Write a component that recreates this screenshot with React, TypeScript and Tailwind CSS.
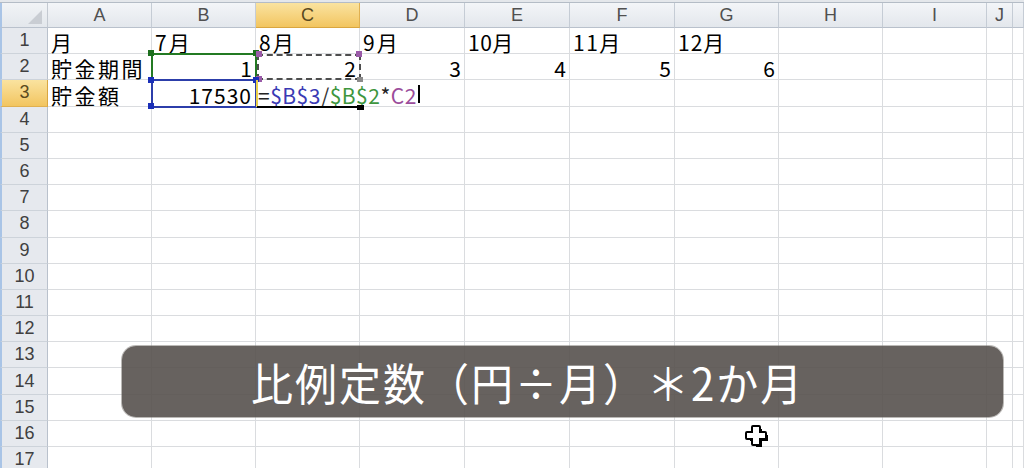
import type { ReactNode } from 'react';

// ─── Sheet layout ─────────────────────────────────────────────────────────────

const COLS = [
  { name: 'A', w: 'w-[104px]' },
  { name: 'B', w: 'w-[104px]' },
  { name: 'C', w: 'w-[104px]' },
  { name: 'D', w: 'w-[105px]' },
  { name: 'E', w: 'w-[105px]' },
  { name: 'F', w: 'w-[105px]' },
  { name: 'G', w: 'w-[104px]' },
  { name: 'H', w: 'w-[104px]' },
  { name: 'I', w: 'w-[104px]' },
  { name: 'J', w: 'w-[26px]' },
  { name: '', w: 'flex-1' },
];

type Cell = { text: string; right?: boolean; cls?: string };

const DATA: Record<number, Record<string, Cell>> = {
  1: {
    A: { text: '月', cls: 'tracking-[2px]' },
    B: { text: '7月', cls: 'tracking-[2px]' },
    C: { text: '8月', cls: 'tracking-[2px]' },
    D: { text: '9月', cls: 'tracking-[2px]' },
    E: { text: '10月', cls: 'tracking-[0.5px]' },
    F: { text: '11月', cls: 'tracking-[1.5px]' },
    G: { text: '12月', cls: 'tracking-[1px]' },
  },
  2: {
    A: { text: '貯金期間', cls: 'tracking-[2.5px]' },
    B: { text: '1', right: true },
    C: { text: '2', right: true },
    D: { text: '3', right: true },
    E: { text: '4', right: true },
    F: { text: '5', right: true },
    G: { text: '6', right: true },
  },
  3: {
    A: { text: '貯金額', cls: 'tracking-[2.5px]' },
    B: { text: '17530', right: true, cls: 'tracking-[1px]' },
  },
};

const ROWS = Array.from({ length: 17 }, (_, i) => i + 1);

// ─── Pieces ───────────────────────────────────────────────────────────────────

function Corner() {
  return (
    <div className="relative w-[48px] shrink-0 border-l-2 border-l-[#a9c4e6] border-r border-r-[#c3c9d1] border-b border-b-[#b9c1cc] bg-gradient-to-b from-[#f1f3f6] to-[#e3e7ec]">
      <svg className="absolute right-[5px] bottom-[3px]" width="14" height="14" viewBox="0 0 14 14">
        <path d="M14 0 V14 H0 Z" fill="#c9cdd3" />
      </svg>
    </div>
  );
}

function ColHeader({ name, w }: { name: string; w: string }) {
  const active = name === 'C';
  return (
    <div
      className={`${w} shrink-0 flex items-center justify-center border-r border-b text-[18px] ${
        active
          ? 'bg-gradient-to-b from-[#fae39f] to-[#f2c55f] border-r-[#e0b050] border-b-[#d9a640] text-[#5a4a20]'
          : 'bg-gradient-to-b from-[#f3f5f8] to-[#e3e7ec] border-r-[#c5ccd5] border-b-[#b9c1cc] text-[#505050]'
      }`}
    >
      {name}
    </div>
  );
}

function RowHeader({ n }: { n: number }) {
  const active = n === 3;
  return (
    <div
      className={`w-[48px] shrink-0 flex items-center justify-center border-l-2 border-l-[#a9c4e6] border-r border-b text-[18px] ${
        active
          ? 'bg-gradient-to-b from-[#fae39f] to-[#f2c55f] border-r-[#d9a640] border-b-[#e0b050] text-[#5a4a20]'
          : 'bg-[#e6e9ee] border-r-[#b9c1cc] border-b-[#cdd3da] text-[#404040]'
      }`}
    >
      {n}
    </div>
  );
}

function Square({ x, y, color }: { x: string; y: string; color: string }) {
  return <div className={`absolute ${x} ${y} ${color} w-[6px] h-[6px]`} />;
}

function Formula() {
  const parts: [string, string][] = [
    ['=', 'text-[#222]'],
    ['$B$3', 'text-[#3a3ab4]'],
    ['/', 'text-[#333]'],
    ['$B$2', 'text-[#3e963e]'],
    ['*', 'text-[#222]'],
    ['C2', 'text-[#9b4c9b]'],
  ];
  return (
    <div className="absolute left-[257px] top-[82px] w-[170px] h-[24px] bg-white flex items-end pl-[1px] text-[21px] leading-[22px] tracking-[0.5px]">
      {parts.map(([t, c], i) => (
        <span key={i} className={c}>
          {t}
        </span>
      ))}
      <span className="ml-[1px] mb-[3px] w-[2px] h-[18px] bg-black" />
    </div>
  );
}

function Overlays(): ReactNode {
  return (
    <>
      {/* B2 reference (green) */}
      <div className="absolute left-[151px] top-[53px] w-[106px] h-[28px] border-2 border-[#237a23]" />
      <Square x="left-[148px]" y="top-[50px]" color="bg-[#1d6e1d]" />
      <Square x="left-[253px]" y="top-[50px]" color="bg-[#1d6e1d]" />

      {/* C2 reference (purple, dashed) */}
      <div className="absolute left-[257px] top-[54px] w-[104px] h-[26px] border-2 border-dashed border-[#4e4e4e]" />
      <Square x="left-[256px]" y="top-[51px]" color="bg-[#9a5aa8]" />
      <Square x="left-[356px]" y="top-[51px]" color="bg-[#9a5aa8]" />
      <Square x="left-[256px]" y="top-[76px]" color="bg-[#9a5aa8]" />
      <Square x="left-[357px]" y="top-[77px]" color="bg-[#8a8a8a]" />

      {/* B3 reference (blue) */}
      <div className="absolute left-[151px] top-[79px] w-[106px] h-[29px] border-2 border-[#2c3eaa]" />
      <Square x="left-[148px]" y="top-[77px]" color="bg-[#1a2fb8]" />
      <Square x="left-[253px]" y="top-[77px]" color="bg-[#1a2fb8]" />
      <Square x="left-[148px]" y="top-[103px]" color="bg-[#1a2fb8]" />

      {/* C3 editing */}
      <Formula />
      <div className="absolute left-[256px] top-[80px] w-[2px] h-[27px] bg-[#e9cf4a]" />
      <div className="absolute left-[257px] top-[106px] w-[100px] h-[2px] bg-black" />
      <div className="absolute left-[357px] top-[105px] w-[7px] h-[5px] bg-black" />
    </>
  );
}

function CellCursor() {
  return (
    <svg className="absolute left-[745px] top-[425px]" width="25" height="25" viewBox="0 0 25 25">
      <path d="M9 2 H15 V8 H21 V14 H15 V20 H9 V14 H3 V8 H9 Z" fill="#000" transform="translate(2 2)" />
      <path
        d="M8 1 H14 Q15 1 15 2 V7 H20 Q21 7 21 8 V13 Q21 14 20 14 H15 V19 Q15 20 14 20 H8 Q7 20 7 19 V14 H2 Q1 14 1 13 V8 Q1 7 2 7 H7 V2 Q7 1 8 1 Z"
        fill="#fff"
        stroke="#000"
        strokeWidth={2}
      />
    </svg>
  );
}

function Caption() {
  return (
    <div className="absolute left-[122px] top-[346px] w-[881px] h-[71px] rounded-[14px] bg-[#56514e]/90 shadow-[0_0_0_1px_rgba(120,115,110,0.5)] flex items-center pl-[129px]">
      <span className="text-white text-[42px] leading-none tracking-[2px] scale-y-[1.06]">比例定数（円÷月）＊2か月</span>
    </div>
  );
}

// ─── App ──────────────────────────────────────────────────────────────────────

export default function App() {
  return (
    <div className="relative w-[1024px] h-[468px] overflow-hidden bg-white font-['Noto_Sans_CJK_JP','Noto_Sans',sans-serif] text-black">
      {/* top strip */}
      <div className="h-[3px] bg-[#e4e7eb] border-b border-b-[#b4bcc6]" />

      {/* column headers */}
      <div className="flex h-[25px] font-['Liberation_Sans',sans-serif]">
        <Corner />
        {COLS.map((c) => (
          <ColHeader key={c.name || 'k'} name={c.name} w={c.w} />
        ))}
      </div>

      {/* rows */}
      {ROWS.map((r) => (
        <div key={r} className="flex h-[26.2px]">
          <div className="flex font-['Liberation_Sans',sans-serif]">
            <RowHeader n={r} />
          </div>
          {COLS.map((c) => {
            const cell = DATA[r]?.[c.name];
            return (
              <div
                key={c.name || 'k'}
                className={`${c.w} shrink-0 flex items-end border-r border-b border-[#dadcdf] px-[3px] text-[21px] leading-[22px] ${
                  cell?.right ? 'justify-end' : 'justify-start'
                }`}
              >
                {cell && <span className={cell.cls}>{cell.text}</span>}
              </div>
            );
          })}
        </div>
      ))}

      <Overlays />
      <Caption />
      <CellCursor />
    </div>
  );
}
